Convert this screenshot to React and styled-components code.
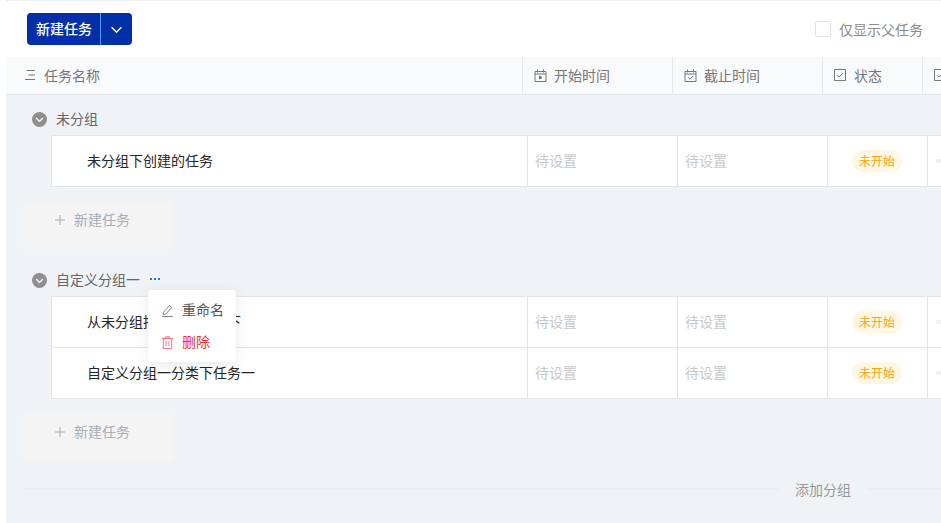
import React from 'react';
import styled, { createGlobalStyle } from 'styled-components';

const GlobalStyle = createGlobalStyle`
  html, body {
    margin: 0;
    padding: 0;
    background: #fff;
  }
  body {
    font-family: "Noto Sans CJK SC", "Liberation Sans", sans-serif;
    font-size: 14px;
    line-height: 20px;
  }
  * { box-sizing: border-box; }
`;

const Page = styled.div`
  width: 941px;
  height: 523px;
  padding-left: 6px;
  overflow: hidden;
  background: #fff;
`;

const Toolbar = styled.div`
  height: 57px;
  padding: 12px 18px 0 21px;
  display: flex;
  justify-content: space-between;
  border-top: 1px solid #eef0f4;
`;

const SplitButton = styled.div`
  width: 105px;
  height: 32px;
  display: flex;
  align-items: stretch;
  background: #002fa7;
  border-radius: 4px;
  color: #fff;
`;

const SplitLabel = styled.div`
  width: 74px;
  padding-left: 1px;
  line-height: 31px;
  text-align: center;
  font-size: 14px;
  font-weight: 500;
  border-right: 1px solid #4aa0ff;
`;

const SplitArrow = styled.div`
  flex: 1;
  display: flex;
  align-items: center;
  justify-content: center;
`;

const ParentOnly = styled.label`
  display: flex;
  align-items: center;
  gap: 8px;
  height: 32px;
  color: #8c8c8c;
`;

const CheckBox = styled.span`
  width: 16px;
  height: 16px;
  border: 1px solid #e2e2e2;
  border-radius: 2px;
  background: #fff;
`;

const HeaderRow = styled.div`
  height: 38px;
  display: grid;
  grid-template-columns: 517px 150px 150px 100px 1fr;
  background: #f9fafc;
  border-bottom: 1px solid #e2e4e7;
`;

const HeaderCell = styled.div`
  display: flex;
  align-items: center;
  gap: ${(p) => p.$gap || 7}px;
  padding-left: ${(p) => p.$inset}px;
  padding-bottom: 1px;
  color: #777;
  white-space: nowrap;
  overflow: hidden;
  border-right: ${(p) => (p.$last ? 'none' : '1px solid #e6e8eb')};
  svg { flex: none; }
`;

const Board = styled.div`
  height: 428px;
  padding: 8px 0 0 18px;
  background: #f0f3f6;
`;

const Group = styled.section`
  margin-bottom: ${(p) => p.$gap}px;
`;

const GroupTitle = styled.div`
  position: relative;
  height: 32px;
  padding: 0 0 2px 8px;
  display: flex;
  align-items: center;
  gap: 9px;
  color: #666;
`;

const Collapse = styled.span`
  width: 15px;
  height: 15px;
  margin-top: 2px;
  border-radius: 50%;
  background: #8f8f8f;
  display: flex;
  align-items: center;
  justify-content: center;
`;

const MoreDots = styled.span`
  margin-left: 1px;
  display: flex;
  gap: 2px;
`;

const Dot = styled.i`
  width: 2px;
  height: 2px;
  background: #2f6fe0;
`;

const Popover = styled.div`
  position: absolute;
  top: 26px;
  left: 124px;
  z-index: 2;
  width: 88px;
  height: 72px;
  padding: 4px 0;
  background: #fff;
  border-radius: 3px;
  box-shadow: 0 3px 14px rgba(0, 0, 0, 0.09);
`;

const PopoverItem = styled.div`
  height: 32px;
  padding: 0 0 2px 13px;
  display: flex;
  align-items: center;
  gap: 8px;
  color: ${(p) => (p.$danger ? '#f4333c' : '#555')};
  svg { margin-top: 2px; }
`;

const TaskTable = styled.div`
  margin-left: 27px;
  border: 1px solid #e4e5e7;
  border-right: none;
  background: #fff;
`;

const TaskRow = styled.div`
  height: ${(p) => p.$height}px;
  display: grid;
  grid-template-columns: 476px 150px 150px 100px 1fr;
  border-top: ${(p) => (p.$first ? 'none' : '1px solid #e4e5e7')};
`;

const NameCell = styled.div`
  display: flex;
  align-items: center;
  padding-left: 35px;
  padding-bottom: 2px;
  color: #262626;
  white-space: nowrap;
  border-right: 1px solid #e4e5e7;
`;

const DateCell = styled.div`
  display: flex;
  align-items: center;
  padding-left: 7px;
  padding-bottom: 2px;
  color: #c8c8c8;
  border-right: 1px solid #e4e5e7;
`;

const StatusCell = styled.div`
  display: flex;
  align-items: center;
  justify-content: center;
  padding-right: 2px;
  border-right: 1px solid #e4e5e7;
`;

const StatusTag = styled.span`
  width: 50px;
  height: 22px;
  line-height: 21px;
  padding-left: 1px;
  text-align: center;
  font-size: 12px;
  color: #f9a30f;
  background: #fff7e4;
  border-radius: 11px;
`;

const ExtraCell = styled.div`
  display: flex;
  align-items: center;
  padding-left: 8px;
`;

const ExtraDash = styled.i`
  width: 6px;
  height: 4px;
  border-radius: 2px;
  background: #f0f0f0;
`;

const AddTask = styled.div`
  width: 150px;
  height: 47px;
  margin: 15px 0 0 -1px;
  padding: 7px 0 0 31px;
  display: flex;
  align-items: flex-start;
  gap: 8px;
  background: #f4f4f5;
  color: #a9adb5;
  svg { margin-top: 5px; }
`;

const AddGroup = styled.div`
  display: flex;
  align-items: center;
  gap: 16px;
  height: 20px;
  line-height: 18px;
  color: #999;
  white-space: nowrap;
`;

const AddGroupLine = styled.span`
  flex: none;
  height: 2px;
  background: #ebeef1;
  width: ${(p) => p.$width}px;
`;

const Chevron = ({ size, color, width }) => (
  <svg width={size} height={size} viewBox="0 0 12 12" fill="none" stroke={color} strokeWidth={width}>
    <path d="M1.5 4 L6 8.5 L10.5 4" />
  </svg>
);

const ListIcon = () => (
  <svg width="12" height="12" viewBox="0 0 12 12" fill="none" stroke="#777" strokeWidth="1">
    <path d="M2.5 1.5 H11 M4.5 6 H11 M1 10.5 H11" />
  </svg>
);

const CalendarIcon = ({ kind }) => (
  <svg width="13" height="13" viewBox="0 0 13 13" fill="none" stroke="#777" strokeWidth="1">
    <path d="M1 2.5 H12 V12.5 H1 Z M1 5 H12 M3.5 0.5 V3.5 M9.5 0.5 V3.5" />
    {kind === 'start'
      ? <path d="M5.5 7 L8 8.5 L5.5 10 Z" fill="#777" />
      : <path d="M4.2 8.5 L6 10.2 L9 7" />}
  </svg>
);

const CheckIcon = () => (
  <svg width="12" height="12" viewBox="0 0 12 12" fill="none" stroke="#777" strokeWidth="1">
    <path d="M0.5 0.5 H11.5 V11.5 H0.5 Z M3.2 6 L5.2 8 L8.8 4.2" />
  </svg>
);

const PenIcon = () => (
  <svg width="13" height="13" viewBox="0 0 13 13" fill="none" stroke="#888" strokeWidth="1">
    <path d="M2.5 8.2 L8.5 1.5 L10.7 3.5 L4.6 10.2 L2 10.8 Z M1 12.5 H12" />
  </svg>
);

const TrashIcon = () => (
  <svg width="13" height="13" viewBox="0 0 13 13" fill="none" stroke="#f5717c" strokeWidth="1">
    <path d="M1 2.5 H12 M4.5 2.5 V0.8 H8.5 V2.5 M2.3 2.5 V12.4 H10.7 V2.5 M5 5 V10 M8 5 V10" />
  </svg>
);

const PlusIcon = () => (
  <svg width="12" height="12" viewBox="0 0 12 12" fill="none" stroke="#a9adb5" strokeWidth="1">
    <path d="M6 1 V11 M1 6 H11" />
  </svg>
);

function Task({ name, first, height }) {
  return (
    <TaskRow $first={first} $height={height}>
      <NameCell>{name}</NameCell>
      <DateCell>待设置</DateCell>
      <DateCell>待设置</DateCell>
      <StatusCell><StatusTag>未开始</StatusTag></StatusCell>
      <ExtraCell><ExtraDash /></ExtraCell>
    </TaskRow>
  );
}

export default function App() {
  return (
    <Page>
      <GlobalStyle />
      <Toolbar>
        <SplitButton>
          <SplitLabel>新建任务</SplitLabel>
          <SplitArrow><Chevron size={13} color="#fff" width={1.4} /></SplitArrow>
        </SplitButton>
        <ParentOnly><CheckBox />仅显示父任务</ParentOnly>
      </Toolbar>
      <HeaderRow>
        <HeaderCell $inset={18} $gap={8}><ListIcon />任务名称</HeaderCell>
        <HeaderCell $inset={11}><CalendarIcon kind="start" />开始时间</HeaderCell>
        <HeaderCell $inset={11}><CalendarIcon kind="end" />截止时间</HeaderCell>
        <HeaderCell $inset={11} $gap={8}><CheckIcon />状态</HeaderCell>
        <HeaderCell $inset={11} $last><CheckIcon /></HeaderCell>
      </HeaderRow>
      <Board>
        <Group $gap={15}>
          <GroupTitle>
            <Collapse><Chevron size={9} color="#fff" width={1.6} /></Collapse>
            未分组
          </GroupTitle>
          <TaskTable>
            <Task name="未分组下创建的任务" first height={50} />
          </TaskTable>
          <AddTask><PlusIcon />新建任务</AddTask>
        </Group>
        <Group $gap={18}>
          <GroupTitle>
            <Collapse><Chevron size={9} color="#fff" width={1.6} /></Collapse>
            自定义分组一
            <MoreDots><Dot /><Dot /><Dot /></MoreDots>
            <Popover>
              <PopoverItem><PenIcon />重命名</PopoverItem>
              <PopoverItem $danger><TrashIcon />删除</PopoverItem>
            </Popover>
          </GroupTitle>
          <TaskTable>
            <Task name="从未分组拖拽到本分组下" first height={50} />
            <Task name="自定义分组一分类下任务一" height={51} />
          </TaskTable>
          <AddTask><PlusIcon />新建任务</AddTask>
        </Group>
        <AddGroup>
          <AddGroupLine $width={755} />
          添加分组
          <AddGroupLine $width={90} />
        </AddGroup>
      </Board>
    </Page>
  );
}
